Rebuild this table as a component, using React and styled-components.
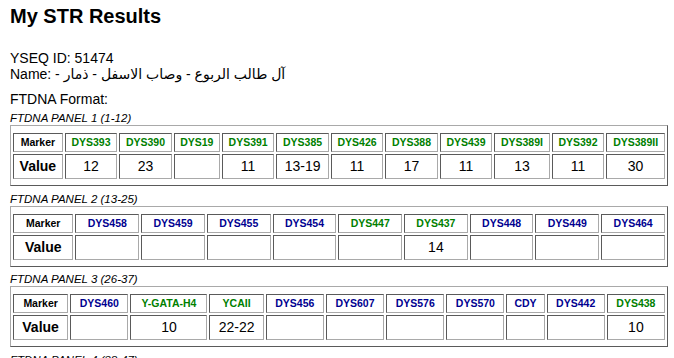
import React from 'react';
import styled, { createGlobalStyle } from 'styled-components';

const GlobalStyle = createGlobalStyle`
  html, body {
    margin: 0;
    padding: 0;
    overflow: hidden;
    background: #fff;
  }
  body {
    font-family: "Liberation Sans", Arial, "DejaVu Sans", sans-serif;
    color: #000;
  }
`;

const Page = styled.div`
  padding: 5px 6px 0 10px;
`;

const Title = styled.h2`
  margin: 0 0 22px 0;
  font-size: 20px;
  line-height: 23px;
  font-weight: bold;
`;

const Info = styled.div`
  font-size: 14px;
  line-height: 16px;
  margin-bottom: 9px;
`;

const FormatLine = styled.div`
  font-size: 14px;
  line-height: 16px;
  margin-bottom: 4px;
`;

const PanelLabel = styled.div`
  font-size: 11.5px;
  line-height: 14px;
  font-style: italic;
`;

const Table = styled.table`
  width: 658px;
  border-collapse: separate;
  border-spacing: 2px;
  padding: 5px 0 4px 0;
  border: 1px solid;
  border-color: #a9a9a9 #5a5a5a #5a5a5a #a9a9a9;
  margin-bottom: 5.5px;
`;

const Cell = styled.td`
  border: 1px solid;
  border-color: #5a5a5a #a9a9a9 #a9a9a9 #5a5a5a;
  text-align: center;
  white-space: nowrap;
`;

const HeadCell = styled(Cell)`
  font-size: 10.5px;
  line-height: 13px;
  font-weight: bold;
  padding: 2px 4px;
  color: ${p => (p.$tone === 'green' ? '#008000' : p.$tone === 'blue' ? '#000090' : '#000')};
`;

const ValueCell = styled(Cell)`
  font-size: 14px;
  line-height: 17px;
  padding: 3px 4px;
  font-weight: ${p => (p.$label ? 'bold' : 'normal')};
`;

const G = 'green';
const B = 'blue';

const panels = [
  {
    title: 'FTDNA PANEL 1 (1-12)',
    markers: [
      ['DYS393', G, '12'],
      ['DYS390', G, '23'],
      ['DYS19', G, ''],
      ['DYS391', G, '11'],
      ['DYS385', G, '13-19'],
      ['DYS426', G, '11'],
      ['DYS388', G, '17'],
      ['DYS439', G, '11'],
      ['DYS389I', G, '13'],
      ['DYS392', G, '11'],
      ['DYS389II', G, '30'],
    ],
  },
  {
    title: 'FTDNA PANEL 2 (13-25)',
    markers: [
      ['DYS458', B, ''],
      ['DYS459', B, ''],
      ['DYS455', B, ''],
      ['DYS454', B, ''],
      ['DYS447', G, ''],
      ['DYS437', G, '14'],
      ['DYS448', B, ''],
      ['DYS449', B, ''],
      ['DYS464', B, ''],
    ],
  },
  {
    title: 'FTDNA PANEL 3 (26-37)',
    markers: [
      ['DYS460', B, ''],
      ['Y-GATA-H4', G, '10'],
      ['YCAII', G, '22-22'],
      ['DYS456', B, ''],
      ['DYS607', B, ''],
      ['DYS576', B, ''],
      ['DYS570', B, ''],
      ['CDY', B, ''],
      ['DYS442', B, ''],
      ['DYS438', G, '10'],
    ],
  },
  {
    title: 'FTDNA PANEL 4 (38-47)',
    markers: [
      ['DYS531', B, ''],
      ['DYS578', B, ''],
      ['DYF395S1', B, ''],
      ['DYS590', B, ''],
      ['DYS537', B, ''],
      ['DYS641', B, ''],
      ['DYS472', B, ''],
      ['DYF406S1', B, ''],
      ['DYS511', B, ''],
    ],
  },
];

const Panel = ({ panel }) => (
  <>
    <PanelLabel>{panel.title}</PanelLabel>
    <Table>
      <tbody>
        <tr>
          <HeadCell>Marker</HeadCell>
          {panel.markers.map(m => (
            <HeadCell key={m[0]} $tone={m[1]}>{m[0]}</HeadCell>
          ))}
        </tr>
        <tr>
          <ValueCell $label>Value</ValueCell>
          {panel.markers.map(m => (
            <ValueCell key={m[0]}>{m[2]}</ValueCell>
          ))}
        </tr>
      </tbody>
    </Table>
  </>
);

export default function App() {
  return (
    <Page>
      <GlobalStyle />
      <Title>My STR Results</Title>
      <Info>
        <div>YSEQ ID: 51474</div>
        <div>Name: - آل طالب الربوع - وصاب الاسفل - ذمار</div>
      </Info>
      <FormatLine>FTDNA Format:</FormatLine>
      {panels.map(p => (
        <Panel key={p.title} panel={p} />
      ))}
    </Page>
  );
}
